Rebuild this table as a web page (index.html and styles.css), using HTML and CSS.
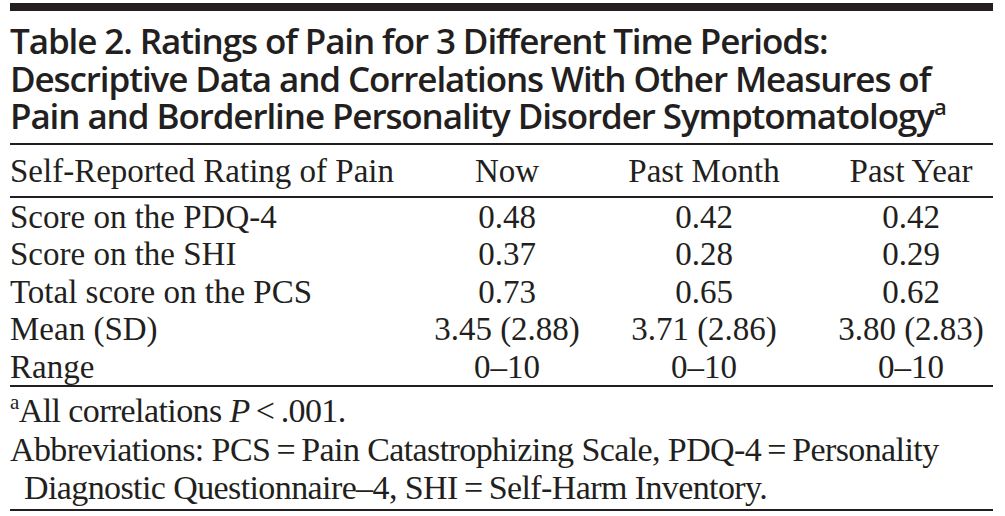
FILE: index.html
```html
<!DOCTYPE html>
<html lang="en">
<head>
<meta charset="utf-8">
<title>Table 2</title>
<link rel="stylesheet" href="styles.css">
</head>
<body>
<div class="table-wrap">
  <div class="rule-thick"></div>
  <h1 class="title">Table 2. Ratings of Pain for 3 Different Time Periods:<br>Descriptive Data and Correlations With Other Measures of<br>Pain and Borderline Personality Disorder Symptomatology<sup class="title-sup">a</sup></h1>
  <table class="data">
    <thead>
      <tr>
        <th class="col-label">Self-Reported Rating of Pain</th>
        <th class="col-now">Now</th>
        <th class="col-month">Past Month</th>
        <th class="col-year">Past Year</th>
      </tr>
    </thead>
    <tbody>
      <tr><td class="col-label">Score on the PDQ-4</td><td class="col-now">0.48</td><td class="col-month">0.42</td><td class="col-year">0.42</td></tr>
      <tr><td class="col-label">Score on the SHI</td><td class="col-now">0.37</td><td class="col-month">0.28</td><td class="col-year">0.29</td></tr>
      <tr><td class="col-label">Total score on the PCS</td><td class="col-now">0.73</td><td class="col-month">0.65</td><td class="col-year">0.62</td></tr>
      <tr><td class="col-label">Mean (SD)</td><td class="col-now">3.45 (2.88)</td><td class="col-month">3.71 (2.86)</td><td class="col-year">3.80 (2.83)</td></tr>
      <tr><td class="col-label">Range</td><td class="col-now">0–10</td><td class="col-month">0–10</td><td class="col-year">0–10</td></tr>
    </tbody>
  </table>
  <div class="notes">
    <p class="note"><sup class="note-sup">a</sup>All correlations <i>P</i>&thinsp;&lt;&thinsp;.001.</p>
    <p class="note note-hang">Abbreviations: PCS&thinsp;=&thinsp;Pain Catastrophizing Scale, PDQ-4&thinsp;=&thinsp;Personality Diagnostic Questionnaire–4, SHI&thinsp;=&thinsp;Self-Harm Inventory.</p>
  </div>
</div>
</body>
</html>
```
FILE: styles.css
```css
html, body {
  margin: 0;
  padding: 0;
  background: #ffffff;
}

.table-wrap {
  width: 983px;
  margin-left: 10px;
  padding-top: 3px;
  color: #231f20;
}

.rule-thick {
  height: 8px;
  background: #231f20;
}

.title {
  margin: 0;
  padding: 11px 0 8px;
  font-family: "Open Sans", "Noto Sans", sans-serif;
  font-weight: 600;
  font-size: 35px;
  line-height: 37.5px;
  letter-spacing: -1.1px;
  border-bottom: 2px solid #231f20;
}

.title-sup {
  font-size: 22px;
  line-height: 0;
  vertical-align: 14px;
}

.data {
  width: 100%;
  border-collapse: collapse;
  font-family: "Liberation Serif", "Times New Roman", serif;
  font-size: 33px;
}

.data th {
  font-weight: 400;
  height: 49px;
  padding: 2px 0 0;
  line-height: 37px;
  border-bottom: 2px solid #231f20;
  vertical-align: middle;
}

.data td {
  height: 35.5px;
  padding: 2px 0 0;
  line-height: 35px;
  vertical-align: middle;
}

.data tbody tr:last-child td {
  border-bottom: 2px solid #231f20;
}

.col-label {
  text-align: left;
  width: 420px;
}

.col-now {
  text-align: center;
  width: 154px;
}

.col-month {
  text-align: center;
  width: 240px;
}

.data .col-year {
  text-align: center;
  padding-left: 5px;
}

.notes {
  padding: 5px 0 1px;
  border-bottom: 2px solid #231f20;
  font-family: "Liberation Serif", "Times New Roman", serif;
  font-size: 34px;
  letter-spacing: -0.6px;
  line-height: 38.5px;
}

.note {
  margin: 0;
}

.note-hang {
  padding-left: 14px;
  text-indent: -14px;
}

.note-sup {
  font-size: 21px;
  line-height: 0;
  vertical-align: 13px;
}
```
